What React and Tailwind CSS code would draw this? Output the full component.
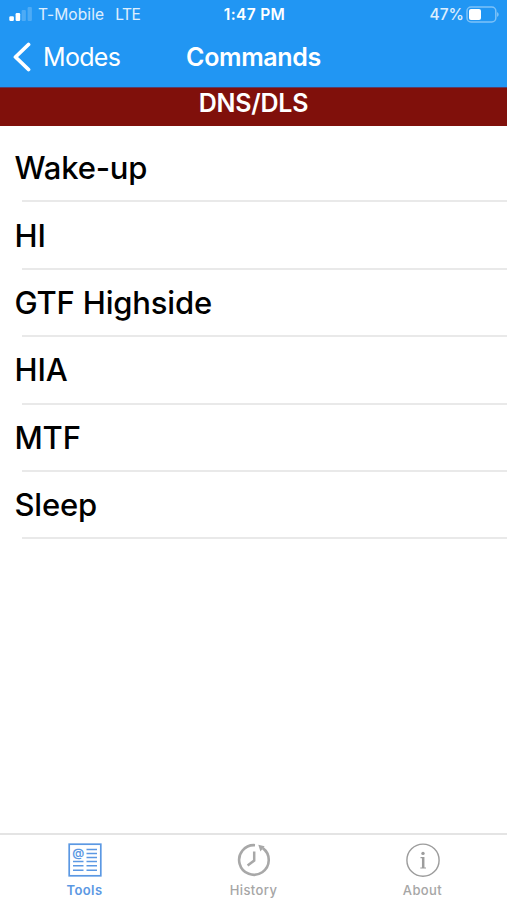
import React from "react";

const commands = ["Wake-up", "HI", "GTF Highside", "HIA", "MTF", "Sleep"];

function SignalBars() {
  return (
    <svg width="23" height="16" viewBox="0 0 23 16" fill="white">
      <rect x="0.3" y="9.2" width="4.6" height="4.8" rx="1.2" />
      <rect x="6.6" y="6" width="4.6" height="8" rx="1.2" />
      <rect x="12.6" y="3" width="4.3" height="11" rx="1" opacity="0.2" />
      <rect x="18.6" y="0" width="4.3" height="14" rx="1" opacity="0.2" />
    </svg>
  );
}

function Battery() {
  return (
    <svg width="34" height="18" viewBox="0 0 34 18" fill="none">
      <rect
        x="1"
        y="1"
        width="28.8"
        height="15"
        rx="4"
        stroke="white"
        strokeOpacity="0.42"
        strokeWidth="1.5"
      />
      <rect x="3" y="3" width="12" height="11" rx="2" fill="white" />
      <path d="M31.2 6.2C33 6.7 33 10.3 31.2 10.8Z" fill="white" fillOpacity="0.5" />
    </svg>
  );
}

function ToolsIcon() {
  return (
    <svg width="34" height="34" viewBox="0 0 34 34" fill="none" stroke="#5b98e3">
      <rect x="1.2" y="1.2" width="31.6" height="31.6" strokeWidth="1.7" />
      <text
        x="10.2"
        y="14"
        textAnchor="middle"
        fontSize="12"
        fill="#5b98e3"
        stroke="none"
        className="font-['Inter'] font-semibold"
      >
        @
      </text>
      <path
        d="M18.5 6.5H29M18.5 10.5H29M18.5 14.5H29M5 18.5H15.5M18.5 18.5H29M5 22.8H15.5M18.5 22.8H29M5 27.2H15.5M18.5 27.2H29"
        strokeWidth="1.5"
      />
    </svg>
  );
}

function HistoryIcon() {
  return (
    <svg width="34" height="34" viewBox="0 0 34 34" fill="none" stroke="#a8a8a8">
      <path d="M18 2.2A14.8 14.8 0 1 0 25.8 5.1" strokeWidth="2.6" />
      <path d="M21.3 1.8L27.6 3.2L23.4 8.4Z" fill="#a8a8a8" stroke="none" />
      <path d="M17.2 8.5V17.5L10.6 22.4" strokeWidth="2.5" />
    </svg>
  );
}

function AboutIcon() {
  return (
    <svg width="34" height="34" viewBox="0 0 34 34" fill="none" stroke="#9c9c9c">
      <circle cx="17" cy="17.2" r="16.1" strokeWidth="1.4" />
      <circle cx="17" cy="10.4" r="1.7" fill="#9c9c9c" stroke="none" />
      <path d="M17.2 14V25" strokeWidth="2.5" />
      <path d="M14.5 14.6H17M14.3 25H20" strokeWidth="1.2" />
    </svg>
  );
}

const tabs = [
  { label: "Tools", icon: ToolsIcon, active: true },
  { label: "History", icon: HistoryIcon },
  { label: "About", icon: AboutIcon },
];

export default function App() {
  return (
    <div className="flex h-screen w-full flex-col overflow-hidden bg-white font-['Inter','Liberation_Sans',sans-serif] text-black">
      <header className="flex h-[87px] shrink-0 flex-col bg-[#2196f3] text-white">
        {/* Status bar */}
        <div className="grid h-[30px] grid-cols-3 items-center pr-[7px] pl-[9px] text-[15.5px] leading-none">
          <div className="flex items-center text-white/85">
            <SignalBars />
            <span className="ml-[6px] tracking-[0.1px]">T-Mobile</span>
            <span className="ml-[11px] tracking-[-0.4px]">LTE</span>
          </div>
          <div className="text-center font-semibold tracking-[0.35px]">
            1:47 PM
          </div>
          <div className="flex items-center justify-end gap-[2px] text-white/85">
            <span className="font-medium">47%</span>
            <Battery />
          </div>
        </div>

        {/* Navigation bar */}
        <div className="grid flex-1 grid-cols-3 items-center px-[12px] pb-[3px] text-[25px] leading-none">
          <button className="flex items-center gap-[12px] text-left">
            <svg
              width="19"
              height="30"
              viewBox="0 0 19 30"
              fill="none"
              stroke="white"
              strokeWidth="3.8"
              strokeLinecap="round"
              strokeLinejoin="round"
            >
              <path d="M16.5 2.5L3.5 15L16.5 27.5" />
            </svg>
            <span className="tracking-[-0.7px]">Modes</span>
          </button>
          <h1 className="text-center font-semibold tracking-[-0.35px]">
            Commands
          </h1>
        </div>
      </header>

      <div className="h-[39px] shrink-0 border-t border-[#5b3c66] bg-[#80100b] pt-[2px] text-center text-[25px] leading-[26px] font-semibold tracking-[-0.25px] text-white">
        DNS/DLS
      </div>

      <ul className="flex-1 pt-[9px]">
        {commands.map((name) => (
          <li key={name} className="h-[67.4px]">
            <div className="flex h-[65.4px] items-center pl-[14.5px] text-[31px] leading-none font-medium tracking-[-0.18px]">
              {name}
            </div>
            <div className="ml-[22px] h-[2px] bg-[#e9e9e9]" />
          </li>
        ))}
      </ul>

      <nav className="grid h-[67px] shrink-0 grid-cols-3 border-t-2 border-[#e4e4e4] bg-white">
        {tabs.map(({ label, icon: Icon, active }) => (
          <button
            key={label}
            className={`flex flex-col items-center pt-[8px] text-[13px] leading-none ${
              active
                ? "font-semibold text-[#5b98e3]"
                : "font-medium text-[#a6a6a6]"
            }`}
          >
            <Icon />
            <span className="mt-[7px] tracking-[0.4px]">{label}</span>
          </button>
        ))}
      </nav>
    </div>
  );
}
